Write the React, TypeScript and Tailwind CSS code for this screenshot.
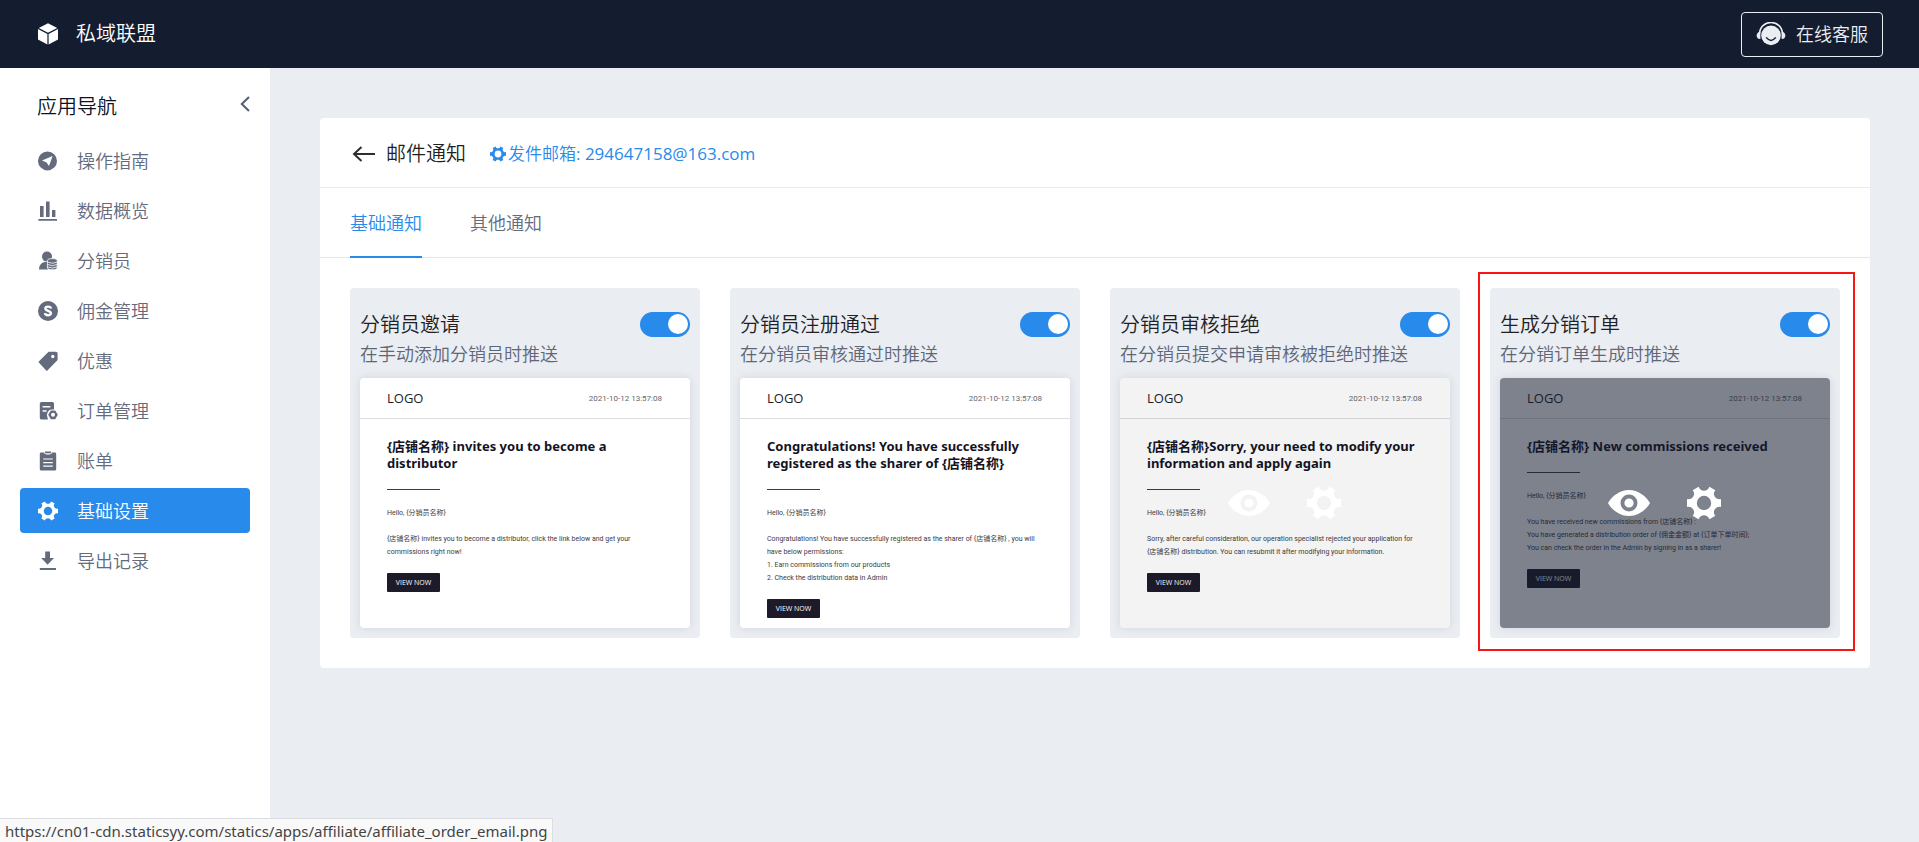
import React, { useState } from 'react'

type IconProps = { className?: string }

type Notice = {
    id: string
    name: string
    desc: string
    title: string
    lines: string[]
    mask?: 'light' | 'dark'
    marked?: boolean
}

const notices: Notice[] = [
    {
        id: 'invite',
        name: '分销员邀请',
        desc: '在手动添加分销员时推送',
        title: '{店铺名称} invites you to become a distributor',
        lines: ['{店铺名称} invites you to become a distributor, click the link below and get your', 'commissions right now!'],
    },
    {
        id: 'approved',
        name: '分销员注册通过',
        desc: '在分销员审核通过时推送',
        title: 'Congratulations! You have successfully registered as the sharer of {店铺名称}',
        lines: [
            'Congratulations! You have successfully registered as the sharer of {店铺名称} , you will',
            'have below permissions:',
            '1. Earn commissions from our products',
            '2. Check the distribution data in Admin',
        ],
    },
    {
        id: 'rejected',
        name: '分销员审核拒绝',
        desc: '在分销员提交申请审核被拒绝时推送',
        title: '{店铺名称}Sorry, your need to modify your information and apply again',
        lines: [
            'Sorry, after careful consideration, our operation specialist rejected your application for',
            '{店铺名称} distribution. You can resubmit it after modifying your information.',
        ],
        mask: 'light',
    },
    {
        id: 'order',
        name: '生成分销订单',
        desc: '在分销订单生成时推送',
        title: '{店铺名称} New commissions received',
        lines: [
            'You have received new commissions from {店铺名称} :',
            'You have generated a distribution order of {佣金金额} at {订单下单时间};',
            'You can check the order in the Admin by signing in as a sharer!',
        ],
        mask: 'dark',
        marked: true,
    },
]

function GearIcon({ className }: IconProps) {
    return (
        <svg viewBox="0 0 34 34" className={className} fill="currentColor" fillRule="evenodd" aria-hidden="true">
            <path d="M11.6 0.8 C13.4 6 20.6 6 22.4 0.8 L28.4 4.2 C24.6 8.2 28.6 14.4 34 13 V21 C28.6 19.6 24.6 25.8 28.4 29.8 L22.4 33.2 C20.6 28 13.4 28 11.6 33.2 L5.6 29.8 C9.4 25.8 5.4 19.6 0 21 V13 C5.4 14.4 9.4 8.2 5.6 4.2 Z M17 9.8 a7.2 7.2 0 1 0 0 14.4 a7.2 7.2 0 1 0 0 -14.4 Z" />
        </svg>
    )
}

function EyeIcon({ className }: IconProps) {
    return (
        <svg viewBox="0 0 42 26" className={className} fill="currentColor" fillRule="evenodd" aria-hidden="true">
            <path d="M0 13 C4 6 12 0 21 0 S38 6 42 13 C38 20 30 26 21 26 S4 20 0 13 Z M21 4.5 a8.5 8.5 0 1 0 0 17 a8.5 8.5 0 1 0 0 -17 Z M21 8.4 a4.6 4.6 0 1 1 0 9.2 a4.6 4.6 0 1 1 0 -9.2 Z" />
        </svg>
    )
}

function CubeIcon({ className }: IconProps) {
    return (
        <svg viewBox="0 0 20 22" className={className} fill="currentColor" aria-hidden="true">
            <path d="M10 0.3 L19.2 4.9 L10 9.7 L0.8 4.9 Z" />
            <path d="M0 6 L9.4 11 V21.6 L0 16.6 Z" />
            <path d="M20 6 L10.6 11 V21.6 L20 16.6 Z" />
        </svg>
    )
}

function ServiceIcon({ className }: IconProps) {
    return (
        <svg viewBox="0 0 30 24" className={className} aria-hidden="true">
            <path d="M3.4 12 C4.4 -3.4 25.6 -3.4 26.6 12" fill="none" stroke="currentColor" strokeWidth="1.6" />
            <path d="M4.4 9.4 V17 C-0.6 17.4 -0.6 10 4.4 9.4 Z M25.6 9.4 V17 C30.6 17.4 30.6 10 25.6 9.4 Z" fill="currentColor" />
            <circle cx="15" cy="13.4" r="9.8" fill="currentColor" />
            <path d="M10.2 15.4 Q15 21.4 19.8 15.4" fill="none" stroke="#141c30" strokeWidth="1.5" />
        </svg>
    )
}

function NavSvg({ children }: { children: React.ReactNode }) {
    return (
        <svg viewBox="0 0 20 20" className="h-5 w-5 shrink-0" fill="currentColor" fillRule="evenodd" aria-hidden="true">
            {children}
        </svg>
    )
}

const navItems = [
    {
        label: '操作指南',
        icon: <NavSvg><path d="M9.5 0.4 a9.5 9.5 0 1 0 0 19 a9.5 9.5 0 1 0 0 -19 Z M14.6 5 L11 15 L8.6 11.4 L4 9.4 Z" /></NavSvg>,
    },
    {
        label: '数据概览',
        icon: <NavSvg><path d="M2 5 H5.6 V16 H2 Z M8 0.6 H11.6 V16 H8 Z M14 9 H17.4 V16 H14 Z M0.4 18 H19 V19.8 H0.4 Z" /></NavSvg>,
    },
    {
        label: '分销员',
        icon: (
            <NavSvg>
                <circle cx="9" cy="5.6" r="5" />
                <path d="M1 18.6 C1 13.6 4 11 8 11 H10 V18.6 Z" />
                <path d="M9.4 9.4 C9.4 7 19.2 7 19.2 9.4 V17 C19.2 19.4 9.4 19.4 9.4 17 Z" stroke="#fff" strokeWidth="0.8" />
                <path d="M9.4 11 Q14.2 13.6 19.2 11 M9.4 13.4 Q14.2 16 19.2 13.4 M9.4 15.8 Q14.2 18.4 19.2 15.8" fill="none" stroke="#fff" strokeWidth="0.8" />
            </NavSvg>
        ),
    },
    {
        label: '佣金管理',
        icon: (
            <NavSvg>
                <circle cx="10" cy="10" r="10" />
                <path d="M13 7.6 C12.6 4.9 7.4 5 7.4 7.6 C7.4 10.4 12.9 9.4 12.9 12.3 C12.9 15 7.3 15 7 12.2" fill="none" stroke="#fff" strokeWidth="2.4" />
            </NavSvg>
        ),
    },
    {
        label: '优惠',
        icon: <NavSvg><path d="M10.6 0.8 H18 Q19.6 0.8 19.6 2.4 V9 L9.4 19.4 Q8.8 20 8.2 19.4 L0.8 11.6 Q0.2 11 0.8 10.4 Z M14.8 3.8 a1.7 1.7 0 1 0 0 3.4 a1.7 1.7 0 1 0 0 -3.4 Z" /></NavSvg>,
    },
    {
        label: '订单管理',
        icon: (
            <NavSvg>
                <path d="M3.4 1 H14.4 Q16 1 16 2.6 V8.6 H14 Q11 8.6 9.8 11 L8.8 14 L10 18.4 H3.4 Q1.8 18.4 1.8 16.8 V2.6 Q1.8 1 3.4 1 Z M4.6 5 V6.6 H12.4 V5 Z M4.6 9.2 V10.8 H8.6 V9.2 Z" />
                <path d="M12.8 9.6 H17.2 L19.8 13.8 L17.2 18.2 H12.8 L10.2 13.8 Z M15 11.8 a2 2 0 1 0 0 4 a2 2 0 1 0 0 -4 Z" />
            </NavSvg>
        ),
    },
    {
        label: '账单',
        icon: <NavSvg><path d="M3 1.6 H6 Q6.4 3.6 10 3.6 T14 1.6 H17 Q18.2 1.6 18.2 3 V18.2 Q18.2 19.6 17 19.6 H3 Q1.8 19.6 1.8 18.2 V3 Q1.8 1.6 3 1.6 Z M5.2 7.4 V8.6 H14.8 V7.4 Z M5.2 11 V12.2 H14.8 V11 Z M5.2 14.6 V15.8 H14.8 V14.6 Z M7 0.4 H13 V2.2 H7 Z" /></NavSvg>,
    },
    { label: '基础设置', active: true, icon: <GearIcon className="h-5 w-5 shrink-0" /> },
    {
        label: '导出记录',
        icon: <NavSvg><path d="M7.2 0.6 H12 V7 H16 L9.6 13.8 L3.2 7 H7.2 Z M1.8 17 H18 V19 H1.8 Z" /></NavSvg>,
    },
]

function Toggle({ label }: { label: string }) {
    const [on, setOn] = useState(true)

    return (
        <label className="relative block h-[25px] w-[50px] shrink-0 cursor-pointer">
            <input
                type="checkbox"
                aria-label={label}
                checked={on}
                onChange={(e) => setOn(e.target.checked)}
                className="peer block h-full w-full appearance-none rounded-full bg-gray-400 checked:bg-[#288aeb]"
            />
            <span className="pointer-events-none absolute top-[2px] left-[2px] h-5 w-5 rounded-full bg-white peer-checked:right-[2px] peer-checked:left-auto" />
        </label>
    )
}

function MailPreview({ notice }: { notice: Notice }) {
    return (
        <div className="relative mt-[10px] h-[250px] overflow-hidden rounded bg-white font-normal shadow-[0_0_10px_rgba(20,28,48,0.1)]">
            <div className="flex h-[41px] items-center justify-between border-b border-[#dcdde0] pt-[2px] pr-7 pl-[27px]">
                <span className="text-[13px] text-[#1d1c28]">LOGO</span>
                <span className="font-['Roboto',sans-serif] text-[8px] text-[#66666c]">2021-10-12 13:57:08</span>
            </div>
            <div className="pt-[19px] pr-6 pl-[27px] text-[7px] leading-[13px] text-[#3c3c44]">
                <h3 className="font-['Noto_Sans','Noto_Sans_CJK_SC',sans-serif] text-[13px] leading-[17px] font-bold text-[#14131f]">
                    {notice.title}
                </h3>
                <div className="mt-[17px] h-px w-[53px] bg-[#3c3c44]" />
                <div className="font-['Roboto','Noto_Sans_CJK_SC',sans-serif] whitespace-nowrap">
                    <p className="mt-[17px]">Hello, {'{分销员名称}'}</p>
                    <div className="mt-[13px]">
                        {notice.lines.map((line) => (
                            <p key={line}>{line}</p>
                        ))}
                    </div>
                </div>
                <span className="mt-[14px] flex h-[19px] w-[53px] items-center justify-center rounded-[1px] bg-[#1d1b29] text-white">
                    VIEW NOW
                </span>
            </div>
            {notice.mask && (
                <div
                    className={`absolute inset-0 flex items-center justify-center gap-[37px] pr-[2px] text-white ${
                        notice.mask === 'dark' ? 'bg-[#141c30]/55' : 'bg-[#141c30]/5'
                    }`}
                >
                    <button type="button" aria-label="预览">
                        <EyeIcon className="h-[26px] w-[42px]" />
                    </button>
                    <button type="button" aria-label="设置">
                        <GearIcon className="h-[34px] w-[34px]" />
                    </button>
                </div>
            )}
        </div>
    )
}

function NoticeCard({ notice }: { notice: Notice }) {
    return (
        <li className="relative rounded bg-[#eaedf2] px-[10px] pt-[21px] pb-[10px]">
            <div className="flex h-[31px] items-center justify-between">
                <h2 className="text-[20px] text-[#1f1f24]">{notice.name}</h2>
                <Toggle label={notice.name} />
            </div>
            <p className="text-[18px] leading-7 text-[#5f6678]">{notice.desc}</p>
            <MailPreview notice={notice} />
            {notice.marked && (
                <div className="pointer-events-none absolute -top-4 -right-[15px] -bottom-[13px] -left-3 border-2 border-[#fb1414]" />
            )}
        </li>
    )
}

export default function App() {
    const [tab, setTab] = useState('基础通知')

    return (
        <div className="flex min-h-screen flex-col bg-[#eaedf2] font-['Open_Sans','Noto_Sans_CJK_SC',sans-serif] font-[350]">
            <header className="flex h-[68px] items-center justify-between bg-[#141c30] pr-9 pl-[38px] text-white">
                <div className="flex items-center gap-[18px]">
                    <CubeIcon className="h-[22px] w-5" />
                    <span className="text-[20px]">私域联盟</span>
                </div>
                <button type="button" className="flex h-[45px] items-center gap-[10px] rounded border border-[#eaedf2] px-[14px] text-[18px] text-[#eaedf2]">
                    <ServiceIcon className="h-6 w-[30px]" />
                    在线客服
                </button>
            </header>

            <div className="flex flex-1">
                <aside className="w-[270px] shrink-0 bg-white px-5 pt-5">
                    <div className="flex h-9 items-center justify-between pl-[17px]">
                        <span className="pt-[2px] text-[20px] text-[#0d1326]">应用导航</span>
                        <button type="button" aria-label="收起" className="pb-1 text-[#555e76]">
                            <svg viewBox="0 0 10 16" className="h-4 w-[10px]" fill="none" stroke="currentColor" strokeWidth="2" aria-hidden="true">
                                <path d="M9 1 L1.8 8 L9 15" />
                            </svg>
                        </button>
                    </div>
                    <nav className="mt-[14px] flex flex-col gap-[5px]">
                        {navItems.map((item) => (
                            <a
                                key={item.label}
                                href="#"
                                className={`flex h-[45px] items-center gap-[19px] rounded pt-px pl-[18px] text-[18px] ${
                                    item.active ? 'bg-[#288aeb] text-white' : 'text-[#646b7d]'
                                }`}
                            >
                                {item.icon}
                                {item.label}
                            </a>
                        ))}
                    </nav>
                </aside>

                <main className="min-w-0 flex-1 py-[50px] pr-[49px] pl-[50px]">
                    <section className="rounded bg-white">
                        <div className="flex h-[70px] items-center border-b border-[#eaebee] px-8 pt-[2px]">
                            <button type="button" aria-label="返回" className="text-[#2e2e33]">
                                <svg viewBox="0 0 24 16" className="h-4 w-6" fill="none" stroke="currentColor" strokeWidth="2" aria-hidden="true">
                                    <path d="M23 8 H2 M9.5 1 L2 8 L9.5 15" />
                                </svg>
                            </button>
                            <h1 className="ml-[10px] text-[20px] text-[#1f1f24]">邮件通知</h1>
                            <a href="#" className="ml-6 flex items-center gap-[2px] text-[17px] font-normal text-[#288aeb]">
                                <GearIcon className="h-4 w-4" />
                                <span>
                                    <span className="font-[350]">发件邮箱</span>: 294647158@163.com
                                </span>
                            </a>
                        </div>
                        <div className="flex h-[70px] gap-12 border-b border-[#e4e5e9] px-[30px]">
                            {['基础通知', '其他通知'].map((name) => (
                                <button
                                    key={name}
                                    type="button"
                                    onClick={() => setTab(name)}
                                    className={`-mb-px border-b-2 pt-[2px] text-[18px] ${
                                        tab === name ? 'border-[#288aeb] text-[#288aeb]' : 'border-transparent text-[#646b7d]'
                                    }`}
                                >
                                    {name}
                                </button>
                            ))}
                        </div>
                        <ul className="grid grid-cols-4 gap-[30px] p-[30px]">
                            {notices.map((notice) => (
                                <NoticeCard key={notice.id} notice={notice} />
                            ))}
                        </ul>
                    </section>
                </main>
            </div>

            <div className="fixed bottom-0 left-0 h-6 border-t border-r border-[#dcdde0] bg-[#f9f9f9] px-[5px] font-['Noto_Sans',sans-serif] text-[15px] leading-6 font-normal text-[#444]">
                https://cn01-cdn.staticsyy.com/statics/apps/affiliate/affiliate_order_email.png
            </div>
        </div>
    )
}
